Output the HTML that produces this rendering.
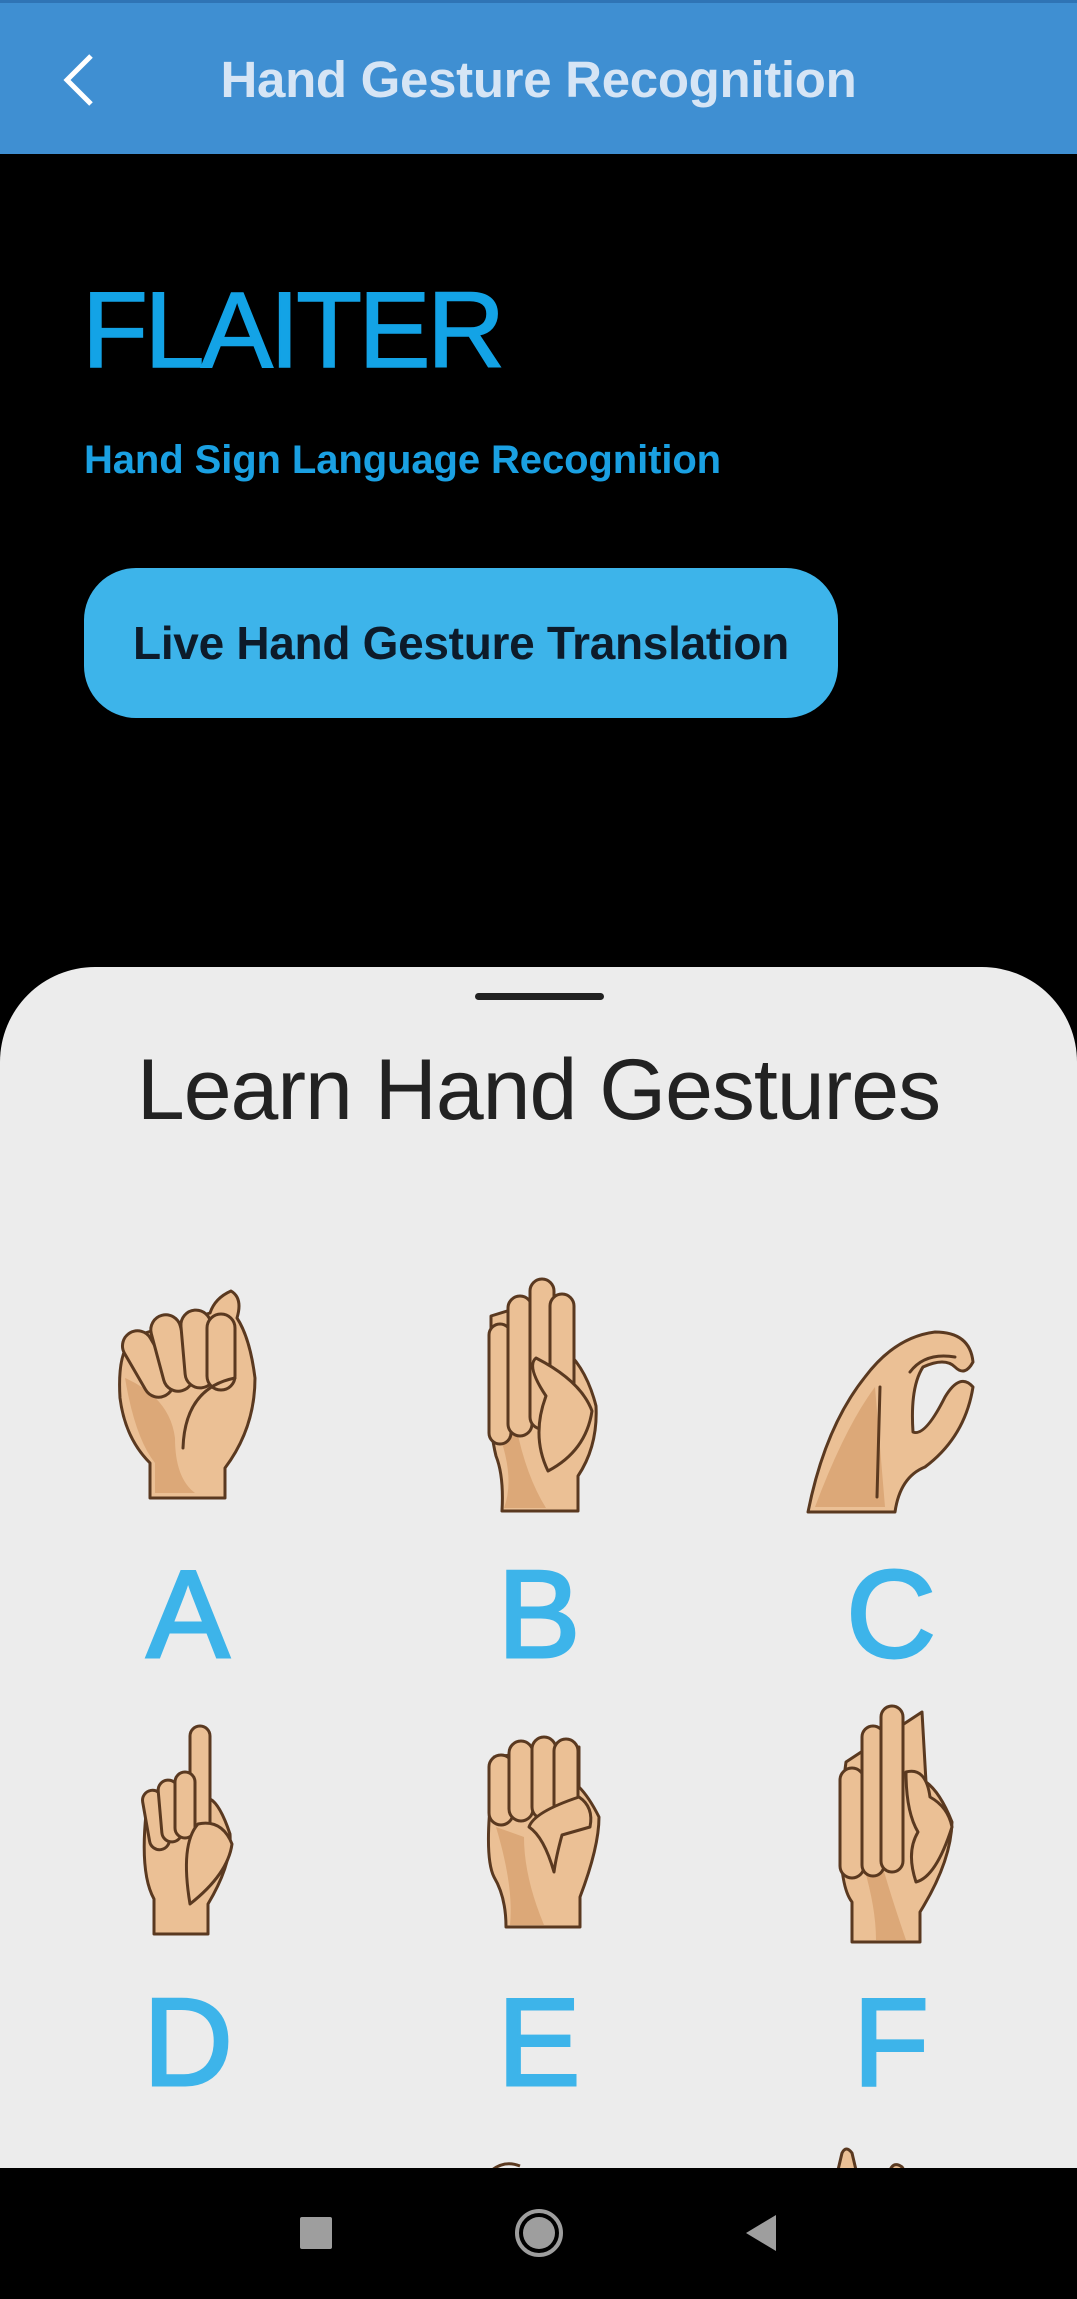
<!DOCTYPE html>
<html><head><meta charset="utf-8"><style>
*{margin:0;padding:0;box-sizing:border-box}
html,body{width:1077px;height:2299px;overflow:hidden;background:#000;font-family:"Liberation Sans",sans-serif}
.abs{position:absolute}
.bar{left:0;top:0;width:1077px;height:154px;background:#3f8fd2;border-top:3px solid #2f74b5}
.title{left:0;width:1077px;top:50px;text-align:center;font-size:51px;font-weight:bold;color:#d6e5f5;letter-spacing:-0.3px;line-height:60px}
.flaiter{left:82px;top:276px;font-size:108px;color:#13a3e6;letter-spacing:-3.5px;line-height:1;-webkit-text-stroke:1.5px #13a3e6}
.sub{left:84px;top:438px;font-size:40px;font-weight:bold;color:#1aa0e2;letter-spacing:-0.1px}
.btn{left:84px;top:568px;width:754px;height:150px;background:#3db4ea;border-radius:52px;text-align:center;line-height:150px;font-size:46px;font-weight:bold;color:#0d1b2a;letter-spacing:-0.3px}
.sheet{left:0;top:967px;width:1077px;height:1210px;background:#ececec;border-radius:95px 95px 0 0;overflow:hidden}
.handle{left:475px;top:993px;width:129px;height:7px;border-radius:4px;background:#222}
.learn{left:0;width:1077px;top:1043px;text-align:center;font-size:86px;color:#222;letter-spacing:-1px;line-height:1.1}
.let{font-size:124px;color:#3db4ea;width:200px;text-align:center;line-height:1;-webkit-text-stroke:3px #3db4ea}
.nav{left:0;top:2168px;width:1077px;height:131px;background:#000}
svg .s{fill:#ebc095;stroke:#5a3920;stroke-width:3;stroke-linejoin:round}
svg .d{fill:#dca878;stroke:none}
svg .l{fill:none;stroke:#5a3920;stroke-width:3;stroke-linecap:round}
</style></head><body>
<div class="abs bar"></div>
<svg class="abs" style="left:55px;top:52px" width="44" height="56"><path d="M36 4 L12 28 L36 52" fill="none" stroke="#fff" stroke-width="5"/></svg>
<div class="abs title">Hand Gesture Recognition</div>
<div class="abs flaiter">FLAITER</div>
<div class="abs sub">Hand Sign Language Recognition</div>
<div class="abs btn">Live Hand Gesture Translation</div>

<div class="abs sheet"></div>
<div class="abs handle"></div>
<div class="abs learn">Learn Hand Gestures</div>

<svg class="abs" style="left:115px;top:1288px" width="150" height="215" viewBox="0 0 150 215">
<path class="s" d="M20 50 Q2 60 5 110 Q10 150 35 175 L35 210 L110 210 L110 180 Q140 140 140 90 Q135 50 122 30 Q128 10 116 3 Q100 10 95 25 L30 45 Z"/>
<path class="d" d="M10 90 Q20 150 40 175 L40 205 L80 205 Q60 190 60 150 Q55 110 10 90Z"/>
<rect class="s" x="18" y="40" width="30" height="72" rx="15" transform="rotate(-30 33 76)"/>
<rect class="s" x="42" y="26" width="30" height="78" rx="15" transform="rotate(-15 57 65)"/>
<rect class="s" x="68" y="22" width="30" height="78" rx="15" transform="rotate(-5 83 61)"/>
<rect class="s" x="92" y="26" width="28" height="76" rx="14"/>
<path class="l" d="M120 90 Q70 100 68 160"/>
</svg>
<svg class="abs" style="left:486px;top:1276px" width="115" height="237" viewBox="0 0 115 237">
<path class="s" d="M5 60 Q0 140 10 180 Q18 200 16 235 L92 235 L92 200 Q112 170 110 130 Q100 90 75 70 L70 20 L5 40Z"/>
<path class="d" d="M10 150 Q30 200 18 232 L60 232 Q40 200 30 150Z"/>
<rect class="s" x="3" y="48" width="22" height="120" rx="11"/>
<rect class="s" x="22" y="20" width="24" height="140" rx="12"/>
<rect class="s" x="44" y="3" width="24" height="150" rx="12"/>
<rect class="s" x="64" y="18" width="24" height="140" rx="12"/>
<path class="s" d="M50 82 Q40 90 60 120 Q45 160 62 195 Q100 175 106 135 Q95 105 50 82Z"/>
</svg>
<svg class="abs" style="left:805px;top:1317px" width="178" height="198" viewBox="0 0 178 198">
<path class="s" d="M3 195 Q20 110 60 60 Q90 20 130 15 Q165 15 168 45 Q160 60 150 50 Q140 40 118 50 Q105 70 108 115 Q120 120 140 80 Q155 55 168 70 Q160 120 120 150 Q95 160 90 195Z"/>
<path class="d" d="M10 190 Q40 110 70 70 L80 190Z"/>
<path class="l" d="M75 70 L72 180 M105 55 Q120 35 150 40"/>
</svg>
<svg class="abs" style="left:140px;top:1724px" width="100" height="214" viewBox="0 0 100 214">
<path class="s" d="M6 90 Q0 150 14 175 L14 210 L68 210 L68 180 Q92 140 90 110 Q80 80 70 75 L66 10 Q62 0 54 5 L48 80 L10 85Z"/>
<rect class="s" x="50" y="2" width="20" height="160" rx="10"/>
<rect class="s" x="6" y="66" width="20" height="60" rx="10" transform="rotate(-10 16 96)"/>
<rect class="s" x="20" y="56" width="20" height="62" rx="10" transform="rotate(-5 30 87)"/>
<rect class="s" x="35" y="48" width="20" height="66" rx="10"/>
<path class="s" d="M58 100 Q40 120 50 180 Q88 150 92 120 Q82 95 58 100Z"/>
</svg>
<svg class="abs" style="left:484px;top:1727px" width="120" height="204" viewBox="0 0 120 204">
<path class="s" d="M8 60 Q0 130 10 150 Q22 170 22 200 L96 200 L96 170 Q115 120 115 90 Q105 70 95 60 L95 20 L10 30Z"/>
<path class="d" d="M12 100 Q30 160 26 198 L60 198 Q40 150 40 110Z"/>
<rect class="s" x="5" y="28" width="24" height="70" rx="12"/>
<rect class="s" x="25" y="14" width="24" height="80" rx="12"/>
<rect class="s" x="48" y="10" width="24" height="82" rx="12"/>
<rect class="s" x="70" y="12" width="24" height="80" rx="12"/>
<path class="s" d="M45 100 Q50 85 95 70 Q110 80 106 100 L78 108 Q72 130 70 145 Q60 110 45 100Z"/>
</svg>
<svg class="abs" style="left:836px;top:1702px" width="122" height="244" viewBox="0 0 122 244">
<path class="s" d="M6 90 Q0 180 16 200 L16 240 L84 240 L84 210 Q115 160 116 120 Q104 90 90 80 L86 10 L10 60Z"/>
<path class="d" d="M12 120 Q40 190 40 238 L70 238 Q50 180 40 140Z"/>
<rect class="s" x="4" y="66" width="24" height="110" rx="12"/>
<rect class="s" x="26" y="24" width="22" height="150" rx="11"/>
<rect class="s" x="45" y="4" width="22" height="166" rx="11"/>
<path class="s" d="M70 70 Q90 65 94 95 Q112 105 116 125 Q100 175 80 180 Q70 150 82 130 Q70 110 70 70Z"/>
</svg>

<div class="abs let" style="left:88px;top:1553px">A</div>
<div class="abs let" style="left:439px;top:1553px">B</div>
<div class="abs let" style="left:791px;top:1553px">C</div>
<div class="abs let" style="left:88px;top:1981px">D</div>
<div class="abs let" style="left:439px;top:1981px">E</div>
<div class="abs let" style="left:791px;top:1981px">F</div>

<svg class="abs" style="left:830px;top:2145px" width="80" height="25"><path class="s" d="M8 25 L12 8 Q16 0 22 8 L26 25Z M60 25 Q64 16 72 22 L74 25Z"/></svg>
<svg class="abs" style="left:490px;top:2160px" width="40" height="10"><path d="M2 10 Q15 0 30 6" fill="none" stroke="#5a3920" stroke-width="3"/></svg>

<div class="abs nav"></div>
<div class="abs" style="left:300px;top:2217px;width:32px;height:32px;background:#9e9e9e;border-radius:2px"></div>
<div class="abs" style="left:515px;top:2209px;width:48px;height:48px;border:4px solid #9e9e9e;border-radius:50%"></div>
<div class="abs" style="left:523px;top:2217px;width:32px;height:32px;background:#9e9e9e;border-radius:50%"></div>
<svg class="abs" style="left:744px;top:2213px" width="34" height="40"><path d="M32 2 L32 38 L2 20Z" fill="#9e9e9e"/></svg>
</body></html>
